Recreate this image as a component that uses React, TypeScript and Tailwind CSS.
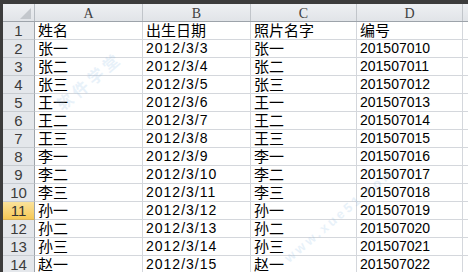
import React from "react";

type Row = [string, string, string, string];

const rows: Row[] = [
  ["姓名", "出生日期", "照片名字", "编号"],
  ["张一", "2012/3/3", "张一", "201507010"],
  ["张二", "2012/3/4", "张二", "201507011"],
  ["张三", "2012/3/5", "张三", "201507012"],
  ["王一", "2012/3/6", "王一", "201507013"],
  ["王二", "2012/3/7", "王二", "201507014"],
  ["王三", "2012/3/8", "王三", "201507015"],
  ["李一", "2012/3/9", "李一", "201507016"],
  ["李二", "2012/3/10", "李二", "201507017"],
  ["李三", "2012/3/11", "李三", "201507018"],
  ["孙一", "2012/3/12", "孙一", "201507019"],
  ["孙二", "2012/3/13", "孙二", "201507020"],
  ["孙三", "2012/3/14", "孙三", "201507021"],
  ["赵一", "2012/3/15", "赵一", "201507022"],
];

const cols = ["A", "B", "C", "D"];
const widths = ["w-[108px]", "w-[108px]", "w-[106px]", "w-[106px]"];
const activeRow = 11;

export default function App() {
  return (
    <div className="relative w-[468px] h-[272px] overflow-hidden bg-[#3c3c3c] pt-[4px] pl-[3px] font-['Liberation_Sans','Noto_Sans_CJK_SC',sans-serif]">
      <div className="bg-white h-full">
        {/* column headers */}
        <div className="flex h-[18px] bg-gradient-to-b from-[#eef0f3] to-[#e1e4e8] border-b border-[#9da3aa]">
          <div className="relative w-[32px] shrink-0 border-r border-[#b7bcc2]">
            <div className="absolute right-[3px] bottom-[2px] w-0 h-0 border-l-[11px] border-l-transparent border-b-[11px] border-b-[#c3c7cc]" />
          </div>
          {cols.map((c, i) => (
            <div
              key={c}
              className={`${widths[i]} shrink-0 border-r border-[#c1c5ca] flex items-center justify-center pt-[1px] text-[14px] text-[#404040] font-['Liberation_Serif',serif]`}
            >
              {c}
            </div>
          ))}
          <div className="flex-1" />
        </div>

        {/* rows */}
        {rows.map((r, idx) => {
          const n = idx + 1;
          const active = n === activeRow;
          return (
            <div key={n} className="flex h-[18px]">
              <div
                className={`w-[32px] shrink-0 border-r border-b flex items-end justify-center text-[15px] leading-[17px] ${
                  active
                    ? "bg-gradient-to-b from-[#fae29a] to-[#f6c954] border-r-[#9da3aa] border-b-[#d9b35a] text-[#333]"
                    : "bg-[#e4e7eb] border-r-[#9da3aa] border-b-[#c8ccd1] text-[#3c3c3c]"
                }`}
              >
                {n}
              </div>
              {r.map((v, i) => (
                <div
                  key={i}
                  className={`${widths[i]} shrink-0 border-r border-b border-[#d4d7dc] flex items-end pl-[3px] leading-[17px] text-black whitespace-nowrap ${
                    i === 1 && n > 1
                      ? "text-[14px] tracking-[1px]"
                      : i === 3 && n > 1
                      ? "text-[14px]"
                      : "text-[15px]"
                  }`}
                >
                  {v}
                </div>
              ))}
              <div className="flex-1 border-b border-[#d4d7dc]" />
            </div>
          );
        })}
      </div>

      {/* faint site watermark */}
      <div className="pointer-events-none absolute left-[50px] top-[70px] -rotate-[40deg] text-[16px] text-[#8fbde6] opacity-20 font-bold tracking-[4px]">
        软件学堂
      </div>
      <div className="pointer-events-none absolute left-[270px] top-[205px] -rotate-[40deg] text-[13px] text-[#8fbde6] opacity-20 font-bold tracking-[3px]">
        www.xue51.com
      </div>
    </div>
  );
}
